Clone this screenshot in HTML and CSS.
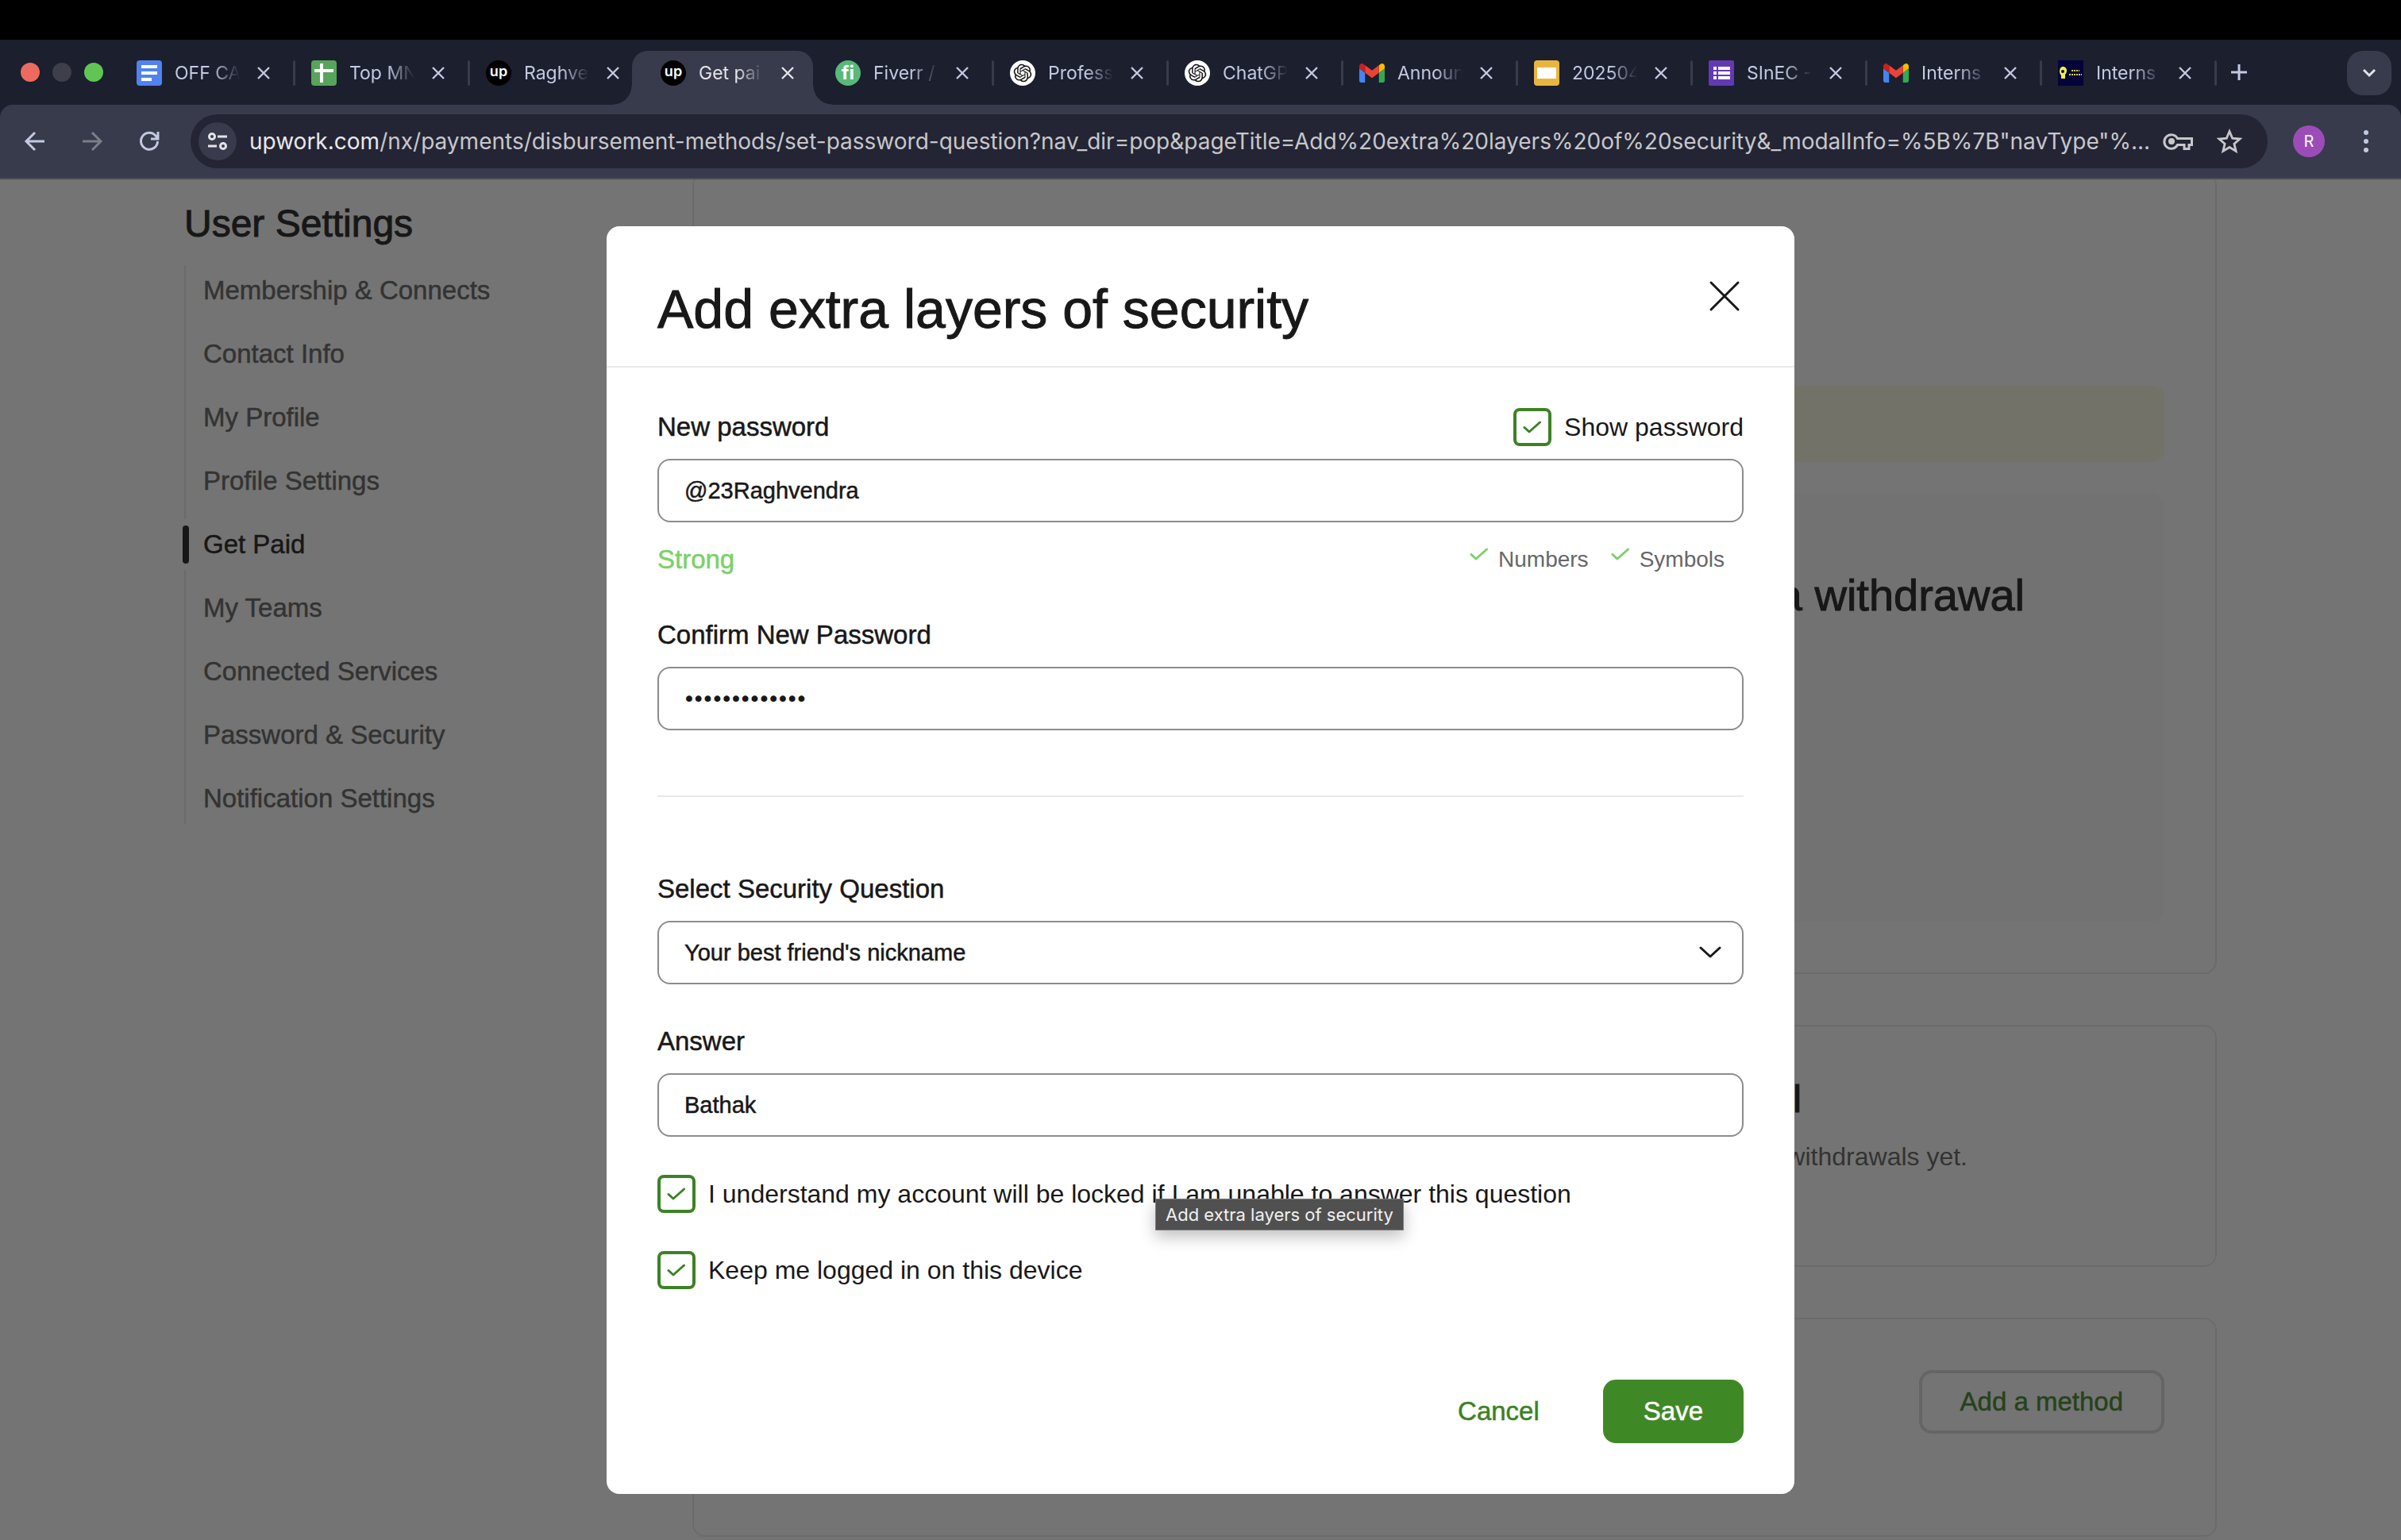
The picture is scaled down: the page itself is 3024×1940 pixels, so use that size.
FILE: index.html
```html
<!DOCTYPE html>
<html lang="en">
<head>
<meta charset="utf-8">
<title>Get paid</title>
<link rel="stylesheet" href="styles.css">
</head>
<body>
<svg class="sprite" aria-hidden="true">
  <symbol id="close" viewBox="0 0 16 16"><path d="M1 1l14 14M15 1L1 15" fill="none" stroke="currentColor" stroke-width="2.4"/></symbol>
  <symbol id="gmail" viewBox="52 42 88 66">
    <path fill="#4285f4" d="M58 108h14V74L52 59v43c0 3.320 2.690 6 6 6"/>
    <path fill="#34a853" d="M120 108h14c3.320 0 6-2.690 6-6V59l-20 15"/>
    <path fill="#fbbc04" d="M120 48v26l20-15v-8c0-7.420-8.470-11.650-14.400-7.200"/>
    <path fill="#ea4335" d="M72 74V48l24 18 24-18v26L96 92"/>
    <path fill="#c5221f" d="M52 51v8l20 15V48l-5.600-4.200c-5.940-4.450-14.400-.220-14.400 7.200"/>
  </symbol>
  <symbol id="knot" viewBox="-5 -5 34 34"><circle cx="12" cy="12" r="17" fill="#fff"/><path fill="#111" d="M22.2819 9.8211a5.9847 5.9847 0 0 0-.5157-4.9108 6.0462 6.0462 0 0 0-6.5098-2.9A6.0651 6.0651 0 0 0 4.9807 4.1818a5.9847 5.9847 0 0 0-3.9977 2.9 6.0462 6.0462 0 0 0 .7427 7.0966 5.98 5.98 0 0 0 .511 4.9107 6.051 6.051 0 0 0 6.5146 2.9001A5.9847 5.9847 0 0 0 13.2599 24a6.0557 6.0557 0 0 0 5.7718-4.2058 5.9894 5.9894 0 0 0 3.9977-2.9001 6.0557 6.0557 0 0 0-.7475-7.0729zm-9.022 12.6081a4.4755 4.4755 0 0 1-2.8764-1.0408l.1419-.0804 4.7783-2.7582a.7948.7948 0 0 0 .3927-.6813v-6.7369l2.02 1.1686a.071.071 0 0 1 .038.052v5.5826a4.504 4.504 0 0 1-4.4945 4.4944zm-9.6607-4.1254a4.4708 4.4708 0 0 1-.5346-3.0137l.142.0852 4.783 2.7582a.7712.7712 0 0 0 .7806 0l5.8428-3.3685v2.3324a.0804.0804 0 0 1-.0332.0615L9.74 19.9502a4.4992 4.4992 0 0 1-6.1408-1.6464zM2.3408 7.8956a4.485 4.485 0 0 1 2.3655-1.9728V11.6a.7664.7664 0 0 0 .3879.6765l5.8144 3.3543-2.0201 1.1685a.0757.0757 0 0 1-.071 0l-4.8303-2.7865A4.504 4.504 0 0 1 2.3408 7.872zm16.5963 3.8558L13.1038 8.364 15.1192 7.2a.0757.0757 0 0 1 .071 0l4.8303 2.7913a4.4944 4.4944 0 0 1-.6765 8.1042v-5.6772a.79.79 0 0 0-.407-.667zm2.0107-3.0231l-.142-.0852-4.7735-2.7818a.7759.7759 0 0 0-.7854 0L9.409 9.2297V6.8974a.0662.0662 0 0 1 .0284-.0615l4.8303-2.7866a4.4992 4.4992 0 0 1 6.6802 4.66zM8.3065 12.863l-2.02-1.1638a.0804.0804 0 0 1-.038-.0567V6.0742a4.4992 4.4992 0 0 1 7.3757-3.4537l-.142.0805L8.704 5.459a.7948.7948 0 0 0-.3927.6813zm1.0976-2.3654l2.602-1.4998 2.6069 1.4998v2.9994l-2.5974 1.4997-2.6067-1.4997Z"/></symbol>
  <symbol id="tick" viewBox="0 0 24 16"><path d="M2 8.500l6 5.500L21.500 2" fill="none" stroke="currentColor" stroke-width="3" stroke-linecap="round" stroke-linejoin="round"/></symbol>
</svg>

<header class="browser">
  <div class="tabstrip">
    <div class="lights"><span class="light red"></span><span class="light dim"></span><span class="light green"></span></div>
    <div class="tabs">
      <div class="tab"><svg class="fav" viewBox="0 0 32 32"><rect width="32" height="32" rx="4" fill="#5083ef"/><path fill="#fff" d="M6 6h20v4H6zM6 14h20v4H6zM6 22h13v4H6z"/></svg><span class="tab-title">OFF CA</span><button class="tab-close" aria-label="Close tab"><svg><use href="#close"/></svg></button></div>
      <div class="tab"><svg class="fav" viewBox="0 0 32 32"><rect width="32" height="32" rx="4" fill="#57a55b"/><path fill="#fff" d="M11 4h4v24h-4zM4 11h24v4H4z"/></svg><span class="tab-title">Top MN</span><button class="tab-close" aria-label="Close tab"><svg><use href="#close"/></svg></button></div>
      <div class="tab before-active"><span class="fav fav-up">up</span><span class="tab-title">Raghve</span><button class="tab-close" aria-label="Close tab"><svg><use href="#close"/></svg></button></div>
      <div class="tab active"><span class="fav fav-up">up</span><span class="tab-title">Get pai</span><button class="tab-close" aria-label="Close tab"><svg><use href="#close"/></svg></button></div>
      <div class="tab"><span class="fav fav-fi">fi</span><span class="tab-title">Fiverr /</span><button class="tab-close" aria-label="Close tab"><svg><use href="#close"/></svg></button></div>
      <div class="tab"><svg class="fav"><use href="#knot"/></svg><span class="tab-title">Profess</span><button class="tab-close" aria-label="Close tab"><svg><use href="#close"/></svg></button></div>
      <div class="tab"><svg class="fav"><use href="#knot"/></svg><span class="tab-title">ChatGP</span><button class="tab-close" aria-label="Close tab"><svg><use href="#close"/></svg></button></div>
      <div class="tab"><svg class="fav"><use href="#gmail"/></svg><span class="tab-title">Announ</span><button class="tab-close" aria-label="Close tab"><svg><use href="#close"/></svg></button></div>
      <div class="tab"><svg class="fav" viewBox="0 0 32 32"><rect width="32" height="32" rx="4" fill="#e8b640"/><path fill="#fff" d="M4 9h24v14H4z"/></svg><span class="tab-title">202504</span><button class="tab-close" aria-label="Close tab"><svg><use href="#close"/></svg></button></div>
      <div class="tab"><svg class="fav" viewBox="0 0 32 32"><rect width="32" height="32" rx="2" fill="#6339b3"/><path fill="#fff" d="M6 8h4v4H6zM12 8h15v4H12zM6 14h4v4H6zM12 14h15v4H12zM6 20h4v4H6zM12 20h15v4H12z"/></svg><span class="tab-title">SInEC -</span><button class="tab-close" aria-label="Close tab"><svg><use href="#close"/></svg></button></div>
      <div class="tab"><svg class="fav"><use href="#gmail"/></svg><span class="tab-title">Interns</span><button class="tab-close" aria-label="Close tab"><svg><use href="#close"/></svg></button></div>
      <div class="tab"><svg class="fav" viewBox="0 0 32 32"><rect width="32" height="32" fill="#04043a"/><path fill="#f2ee4a" d="M6 8c3 0 5 2 5 5 0 2-1 4-2 5v5H4v-4c-1-1-2-3-2-5 0-4 2-6 4-6z"/><circle cx="6" cy="14" r="2" fill="#04043a"/><path stroke="#d9d63f" stroke-width="2" stroke-dasharray="2 1" d="M17 13h10M14 18h16"/></svg><span class="tab-title">Interns</span><button class="tab-close" aria-label="Close tab"><svg><use href="#close"/></svg></button></div>
    </div>
    <button class="new-tab" aria-label="New tab"><svg viewBox="0 0 24 24"><path d="M12 2v20M2 12h20" stroke="currentColor" stroke-width="3"/></svg></button>
    <button class="tab-search" aria-label="Search tabs"><svg viewBox="0 0 20 12"><path d="M3 2l7 7 7-7" fill="none" stroke="currentColor" stroke-width="3"/></svg></button>
  </div>

  <div class="toolbar">
    <button class="tool" aria-label="Back"><svg viewBox="0 0 28 28"><path d="M26 14H4M14 3L3 14l11 11" fill="none" stroke="currentColor" stroke-width="3"/></svg></button>
    <button class="tool muted" aria-label="Forward"><svg viewBox="0 0 28 28"><path d="M2 14h22M14 3l11 11-11 11" fill="none" stroke="currentColor" stroke-width="3"/></svg></button>
    <button class="tool" aria-label="Reload"><svg viewBox="0 0 28 28"><path d="M24.500 14A10.500 10.500 0 1 1 22 7l2.500 3M25 2v9h-9" fill="none" stroke="currentColor" stroke-width="3"/></svg></button>
    <div class="omnibox">
      <button class="site-info" aria-label="Site information"><svg viewBox="0 0 28 28"><g fill="none" stroke="currentColor" stroke-width="3"><circle cx="7" cy="8" r="3.500"/><path d="M14 8h12M2 20h11"/><circle cx="21" cy="20" r="3.500"/></g></svg></button>
      <label class="host" for="url">upwork.com</label>
      <input class="url" id="url" type="text" value="/nx/payments/disbursement-methods/set-password-question?nav_dir=pop&amp;pageTitle=Add%20extra%20layers%20of%20security&amp;_modalInfo=%5B%7B&quot;navType&quot;%...">
      <button class="box-icon" aria-label="Passwords"><svg viewBox="0 0 40 32"><g fill="none" stroke="currentColor" stroke-width="3"><path d="M18.500 12.500h18v8H33v5h-6v-5h-8.500A8.800 8.800 0 1 1 18.500 12.500z"/></g><circle cx="11" cy="16" r="4" fill="currentColor"/></svg></button>
      <button class="box-icon" aria-label="Bookmark"><svg viewBox="0 0 32 32"><path d="M16 3.500l3.700 8.700 9.300.8-7.100 6.200 2.200 9.200-8.100-4.900-8.100 4.900 2.200-9.200L3 13l9.300-.8z" fill="none" stroke="currentColor" stroke-width="2.800"/></svg></button>
    </div>
    <button class="avatar" aria-label="Profile">R</button>
    <button class="menu" aria-label="Menu"><svg viewBox="0 0 8 30"><g fill="currentColor"><circle cx="4" cy="4" r="3"/><circle cx="4" cy="15" r="3"/><circle cx="4" cy="26" r="3"/></g></svg></button>
  </div>
</header>

<main class="page">
  <div class="layout">
    <aside class="sidebar">
      <h2 class="side-title medium">User Settings</h2>
      <ul class="side-nav">
        <li><a href="#">Membership &amp; Connects</a></li>
        <li><a href="#">Contact Info</a></li>
        <li><a href="#">My Profile</a></li>
        <li><a href="#">Profile Settings</a></li>
        <li class="current"><a href="#">Get Paid</a></li>
        <li><a href="#">My Teams</a></li>
        <li><a href="#">Connected Services</a></li>
        <li><a href="#">Password &amp; Security</a></li>
        <li><a href="#">Notification Settings</a></li>
      </ul>
    </aside>
    <div class="cards">
      <section class="card balance">
        <div class="notice"></div>
        <div class="panel"><h2 class="panel-title medium">a withdrawal</h2></div>
      </section>
      <section class="card last">
        <h3 class="last-title medium">l</h3>
        <p class="last-text">withdrawals yet.</p>
      </section>
      <section class="card methods"><button class="btn-outline">Add a method</button></section>
    </div>
  </div>

  <div class="overlay">
    <form class="modal" role="dialog" aria-labelledby="dialog-title">
      <div class="modal-head">
        <h1 class="modal-title medium" id="dialog-title">Add extra layers of security</h1>
        <button type="button" class="modal-close" aria-label="Close"><svg viewBox="0 0 48 48"><path d="M7 7l34 34M41 7L7 41" stroke="currentColor" stroke-width="3" stroke-linecap="round"/></svg></button>
      </div>
      <div class="modal-body">
        <div class="field">
          <div class="label-row">
            <label class="label" for="new-pass">New password</label>
            <div class="check"><input type="checkbox" id="show" checked><label for="show">Show password</label></div>
          </div>
          <input class="input" id="new-pass" type="text" value="@23Raghvendra">
          <div class="strength">
            <span class="strong">Strong</span>
            <div class="rules">
              <span class="rule"><svg><use href="#tick"/></svg>Numbers</span>
              <span class="rule"><svg><use href="#tick"/></svg>Symbols</span>
            </div>
          </div>
        </div>
        <div class="field">
          <div class="label-row"><label class="label" for="confirm">Confirm New Password</label></div>
          <input class="input password" id="confirm" type="password" value="@23Raghvendra">
        </div>
        <hr class="rule-line">
        <div class="field">
          <div class="label-row"><label class="label" for="question">Select Security Question</label></div>
          <div class="select-wrap">
            <select class="input" id="question"><option>Your best friend's nickname</option></select>
            <svg class="chevron" viewBox="0 0 28 16"><path d="M2 2l12 11L26 2" fill="none" stroke="currentColor" stroke-width="3" stroke-linecap="round" stroke-linejoin="round"/></svg>
          </div>
        </div>
        <div class="field">
          <div class="label-row"><label class="label" for="answer">Answer</label></div>
          <input class="input" id="answer" type="text" value="Bathak">
        </div>
        <div class="check agree"><input type="checkbox" id="locked" checked><label for="locked">I understand my account will be locked if I am unable to answer this question</label><span class="tooltip" role="tooltip">Add extra layers of security</span></div>
        <div class="check"><input type="checkbox" id="keep" checked><label for="keep">Keep me logged in on this device</label></div>
      </div>
      <div class="modal-foot">
        <button type="button" class="btn-text">Cancel</button>
        <button type="submit" class="btn-primary">Save</button>
      </div>
    </form>
  </div>
</main>
</body>
</html>
```
FILE: styles.css
```css
:root {
  --ink: #181818;
  --grey: #5e5e5e;
  --line: #e9e9e9;
  --green: #3c8224;
  --strip: #1b1f2e;
  --bar: #373b4b;
  --icon: #c3c9e0;
}

* { box-sizing: border-box; }

body {
  margin: 0;
  height: 100vh;
  display: flex;
  flex-direction: column;
  overflow: hidden;
  background: #000;
  color: var(--ink);
  font-family: "Liberation Sans", Arial, sans-serif;
  font-size: 33px;
}

h1, h2, h3, p, ul { margin: 0; padding: 0; font-weight: 400; }
button, input, select { font: inherit; color: inherit; }
button { border: 0; background: none; padding: 0; }
svg { display: block; }
.sprite { position: absolute; width: 0; height: 0; }
.medium { -webkit-text-stroke: 1px currentColor; }

/* Browser frame */
.browser {
  padding-top: 50px;
  background: linear-gradient(#000 50px, var(--strip) 50px);
  font-family: Inter, sans-serif;
  color: var(--icon);
}
.tabstrip {
  display: flex;
  align-items: flex-end;
  height: 82px;
}
.lights {
  display: flex;
  gap: 16px;
  width: 152px;
  height: 82px;
  padding-left: 26px;
  align-items: center;
}
.light { width: 24px; height: 24px; border-radius: 50%; }
.light.red { background: #ed6a5e; }
.light.dim { background: #3d404b; }
.light.green { background: #61c554; }
.tabs { display: flex; flex: 0 1 2640px; min-width: 0; }
.tab {
  position: relative;
  display: flex;
  align-items: center;
  flex: 1 1 0;
  min-width: 0;
  height: 68px;
  padding: 0 32px 12px 20px;
}
.tab::after {
  content: "";
  position: absolute;
  right: 0;
  top: 12px;
  width: 3px;
  height: 32px;
  border-radius: 2px;
  background: var(--bar);
}
.before-active::after { display: none; }
.tab.active {
  z-index: 1;
  margin: 0 8px 0 -16px;
  flex-basis: 8px;
  padding-left: 36px;
  padding-right: 24px;
  border-radius: 20px 20px 0 0;
  background: var(--bar);
  color: #e3e4ea;
}
.tab.active::before, .tab.active::after {
  content: "";
  position: absolute;
  top: auto;
  bottom: 0;
  width: 24px;
  height: 24px;
  border-radius: 0;
}
.tab.active::before { left: -24px; background: radial-gradient(circle at 0 0, transparent 23px, var(--bar) 24px); }
.tab.active::after { right: -24px; background: radial-gradient(circle at 100% 0, transparent 23px, var(--bar) 24px); }
.fav { flex: none; width: 32px; height: 32px; }
.fav-up, .fav-fi {
  display: flex;
  align-items: center;
  justify-content: center;
  border-radius: 50%;
  color: #fff;
  font-weight: 600;
  line-height: 28px;
}
.fav-up { background: #000; font-size: 18px; padding-bottom: 4px; }
.fav-fi { background: #58b97a; font-size: 24px; font-weight: 700; }
.tab-title {
  flex: 1 1 0;
  min-width: 0;
  margin: 0 8px 0 16px;
  overflow: hidden;
  white-space: nowrap;
  font-size: 23px;
  line-height: 32px;
  -webkit-mask-image: linear-gradient(90deg, #000 48px, transparent 82px);
  mask-image: linear-gradient(90deg, #000 48px, transparent 82px);
}
.tab-close { width: 16px; height: 16px; }
.tab-close svg { width: 16px; height: 16px; }
.new-tab { width: 56px; height: 82px; display: grid; place-items: center; }
.new-tab svg { width: 24px; height: 24px; }
.tab-search {
  width: 56px;
  height: 56px;
  margin: 0 12px 12px auto;
  display: grid;
  place-items: center;
  border-radius: 20px;
  background: var(--bar);
  color: #e3e4ea;
}
.tab-search svg { width: 20px; height: 12px; }

.toolbar {
  display: flex;
  align-items: center;
  height: 94px;
  padding: 0 24px 0 8px;
  border-bottom: 2px solid #4a4c56;
  background: var(--bar);
  border-radius: 16px 16px 0 0;
}
.tool { width: 72px; height: 72px; display: grid; place-items: center; }
.tool svg { width: 28px; height: 28px; }
.tool.muted { color: #7b7d89; }
.omnibox {
  flex: 1;
  display: flex;
  align-items: center;
  min-width: 0;
  height: 68px;
  margin-left: 16px;
  padding: 0 16px 0 10px;
  border-radius: 34px;
  background: #232534;
  color: #c7c7cb;
  font-size: 28px;
}
.site-info {
  flex: none;
  display: grid;
  place-items: center;
  width: 48px;
  height: 48px;
  margin-right: 16px;
  border-radius: 50%;
  background: var(--bar);
  color: #e3e4ea;
}
.site-info svg { width: 28px; height: 28px; }
.host { color: #e8e8ec; }
.url {
  flex: 1;
  min-width: 0;
  height: 48px;
  padding: 0;
  border: 0;
  background: none;
  outline: none;
}
.box-icon { flex: none; width: 64px; height: 64px; display: grid; place-items: center; }
.box-icon svg { height: 32px; }
.avatar {
  width: 40px;
  height: 40px;
  margin: 0 48px 0 32px;
  border-radius: 50%;
  background: #9c4cb8;
  color: #fff;
  font-size: 20px;
}
.menu svg { width: 8px; height: 30px; }
.menu { margin-right: 16px; }

/* Settings page */
.page {
  position: relative;
  flex: 1;
  min-height: 0;
  overflow: hidden;
  background: #fff;
}
.layout {
  display: grid;
  grid-template-columns: 1fr 3fr;
  max-width: 2560px;
  margin: 0 auto;
}
.sidebar { padding-top: 28px; }
.side-title { font-size: 48px; line-height: 56px; margin-bottom: 24px; }
.side-nav {
  list-style: none;
  display: flex;
  flex-direction: column;
  gap: 16px;
  border-left: 2px solid var(--line);
}
.side-nav li {
  position: relative;
  padding-left: 22px;
  line-height: 64px;
}
.side-nav a { color: var(--grey); text-decoration: none; }
.side-nav .current { margin-left: -2px; padding-left: 24px; background: #fff; }
.side-nav .current a { color: var(--ink); }
.side-nav .current::before {
  content: "";
  position: absolute;
  left: -2px;
  top: 8px;
  width: 8px;
  height: 48px;
  border-radius: 4px;
  background: var(--ink);
}
.cards { display: flex; flex-direction: column; gap: 64px; margin-top: -9px; }
.card { padding: 64px; border: 2px solid var(--line); border-radius: 16px; }
.balance { padding-top: 267px; }
.notice { height: 96px; margin-bottom: 40px; border-radius: 16px; background: #faf9e0; }
.panel {
  min-height: 539px;
  padding: 96px 176px 96px 64px;
  border-radius: 16px;
  background: #f9f9f9;
  text-align: right;
}
.panel-title { font-size: 56px; line-height: 64px; }
.last { min-height: 305px; text-align: right; }
.last-title { font-size: 48px; line-height: 56px; padding-right: 457px; }
.last-text { font-size: 32px; line-height: 48px; margin-top: 20px; padding-right: 248px; color: var(--grey); }
.methods { min-height: 276px; display: flex; justify-content: flex-end; align-items: flex-start; }
.btn-outline {
  height: 80px;
  padding: 0 48px;
  border: 4px solid #d9d9d9;
  border-radius: 16px;
  color: var(--green);
}

/* Dialog */
.overlay {
  position: absolute;
  inset: 0;
  padding-top: 59px;
  background: rgba(24, 24, 24, .6);
}
.modal {
  max-width: 1496px;
  margin: 0 auto;
  border-radius: 16px;
  background: #fff;
}
.modal-head {
  display: flex;
  justify-content: space-between;
  padding: 64px 64px 32px;
  border-bottom: 2px solid var(--line);
}
.modal-title { font-size: 68px; line-height: 80px; }
.modal-close, .modal-close svg { width: 48px; height: 48px; }
.modal-body {
  display: flex;
  flex-direction: column;
  gap: 48px;
  padding: 51px 64px 0;
}
.label-row {
  display: flex;
  align-items: center;
  justify-content: space-between;
  height: 48px;
  margin-bottom: 16px;
}
.input {
  display: block;
  width: 100%;
  height: 80px;
  padding: 0 32px;
  border: 2px solid #8c8c8c;
  border-radius: 16px;
  background: #fff;
  font-size: 29px;
  outline: none;
  appearance: none;
}
.check { position: relative; display: flex; align-items: center; gap: 16px; font-size: 32px; line-height: 48px; }
.check input {
  appearance: none;
  flex: none;
  width: 48px;
  height: 48px;
  margin: 0;
  border: 4px solid var(--green);
  border-radius: 8px;
  background: center / 24px 16px no-repeat url("data:image/svg+xml,%3Csvg xmlns='http://www.w3.org/2000/svg' viewBox='0 0 24 16'%3E%3Cpath d='M2 8.500l6 5.500L21.500 2' fill='none' stroke='%233c8224' stroke-width='3' stroke-linecap='round' stroke-linejoin='round'/%3E%3C/svg%3E");
}
.strength {
  display: flex;
  justify-content: space-between;
  margin-top: 24px;
  line-height: 46px;
}
.strong { color: #7dd068; }
.rules { display: flex; gap: 28px; padding-right: 24px; font-size: 28px; color: #676767; }
.rule { display: flex; gap: 12px; }
.rule svg { width: 24px; height: 16px; margin-top: 8px; color: #7dd068; }
.rule-line {
  width: 100%;
  margin: 34px 0 44px;
  border: 0;
  border-top: 2px solid var(--line);
}
.select-wrap { display: grid; align-items: center; }
.select-wrap > * { grid-area: 1 / 1; }
.chevron { width: 28px; height: 16px; margin-right: 28px; justify-self: end; pointer-events: none; }
.tooltip {
  position: absolute;
  left: 627px;
  top: 30px;
  padding: 0 12px;
  border: 1px solid #7a7a7a;
  background: #505050;
  color: #f0f0f0;
  font-family: Inter, sans-serif;
  font-size: 22px;
  line-height: 38px;
  white-space: nowrap;
  box-shadow: 0 8px 20px rgba(0, 0, 0, .25);
}
.modal-foot {
  display: flex;
  justify-content: flex-end;
  gap: 80px;
  padding: 114px 64px 64px;
}
.btn-text { color: var(--green); }
.btn-primary {
  height: 80px;
  padding: 0 51px;
  border-radius: 16px;
  background: #3f8826;
  color: #fff;
}
.label, .side-nav a, .input, .strong, .btn-text, .btn-primary, .btn-outline { -webkit-text-stroke: 0.5px currentColor; }
.input.password {
  font-family: "DejaVu Sans", sans-serif;
  font-size: 20px;
  -webkit-text-stroke: 2px currentColor;
}
```
